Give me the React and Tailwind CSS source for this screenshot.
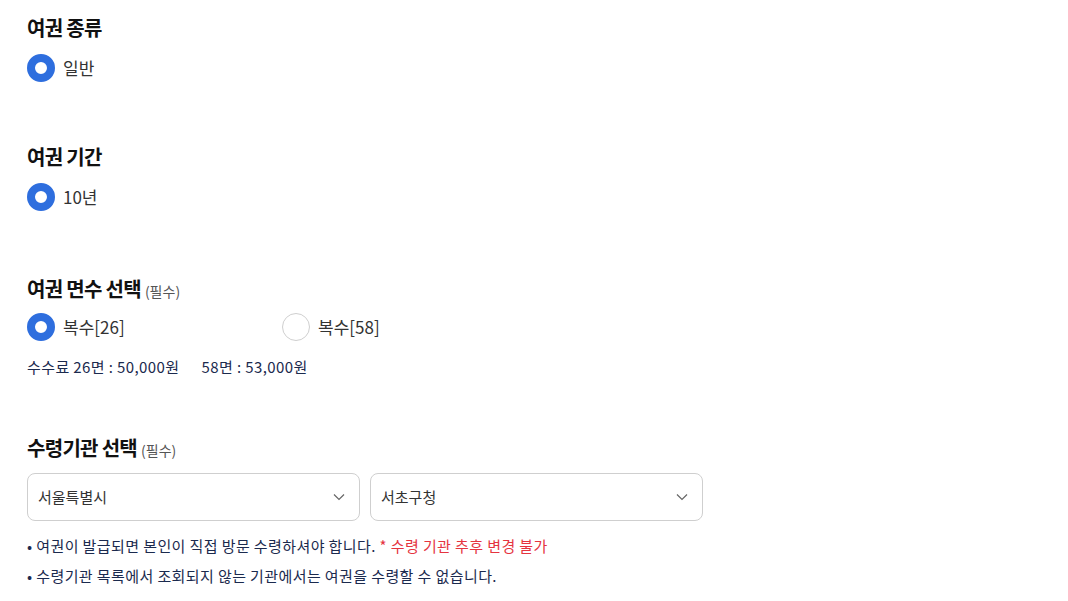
import React from "react";

const font = { fontFamily: '"Noto Sans CJK KR", "Noto Sans", sans-serif' };

function Radio({ checked, label }) {
  return (
    <div className="flex items-center">
      {checked ? (
        <span className="box-border block h-[28px] w-[28px] rounded-full border-[8px] border-[#2e6ede] bg-white" />
      ) : (
        <span className="box-border block h-[28px] w-[28px] rounded-full border border-[#cfcfcf] bg-white" />
      )}
      <span className="ml-[8px] text-[17px] leading-[24px] text-[#333]">{label}</span>
    </div>
  );
}

function Chevron() {
  return (
    <svg width="12" height="8" viewBox="0 0 12 8" fill="none">
      <path d="M1 1.5 L6 6.5 L11 1.5" stroke="#666" strokeWidth="1.2" />
    </svg>
  );
}

function Select({ value }) {
  return (
    <div className="flex h-[48px] w-[333px] items-center justify-between rounded-[8px] border border-[#cfcfcf] bg-white pl-[10px] pr-[14px]">
      <span className="text-[15px] text-[#333]">{value}</span>
      <Chevron />
    </div>
  );
}

export default function App() {
  return (
    <div style={font} className="min-h-[601px] w-[1068px] bg-white pl-[27px] pt-[14px]">
      <h2 className="h-[28px] text-[20px] font-bold leading-[28px] tracking-[-0.7px] text-[#111]">여권 종류</h2>
      <div className="mt-[12px]">
        <Radio checked label="일반" />
      </div>

      <h2 className="mt-[61px] h-[28px] text-[20px] font-bold leading-[28px] tracking-[-0.7px] text-[#111]">여권 기간</h2>
      <div className="mt-[12px]">
        <Radio checked label="10년" />
      </div>

      <h2 className="mt-[64px] flex h-[28px] items-baseline text-[20px] font-bold leading-[28px] tracking-[-0.7px] text-[#111]">
        여권 면수 선택
        <span className="ml-[4px] text-[14px] font-normal tracking-normal text-[#555]">(필수)</span>
      </h2>
      <div className="mt-[10px] flex">
        <div className="w-[255px]">
          <Radio checked label="복수[26]" />
        </div>
        <Radio label="복수[58]" />
      </div>
      <div className="mt-[15px] flex text-[15px] leading-[22px] tracking-[0.4px] text-[#1b2a4e]">
        <span>수수료 26면 : 50,000원</span>
        <span className="ml-[22px]">58면 : 53,000원</span>
      </div>

      <h2 className="mt-[56px] flex h-[28px] items-baseline text-[20px] font-bold leading-[28px] tracking-[-0.7px] text-[#111]">
        수령기관 선택
        <span className="ml-[4px] text-[14px] font-normal tracking-normal text-[#555]">(필수)</span>
      </h2>
      <div className="mt-[11px] flex gap-[10px]">
        <Select value="서울특별시" />
        <Select value="서초구청" />
      </div>
      <div className="mt-[14px] text-[15px] leading-[22px] tracking-[0.4px] text-[#1b2a4e]">
        <p>
          • 여권이 발급되면 본인이 직접 방문 수령하셔야 합니다.{" "}
          <span className="text-[#e5343f]">* 수령 기관 추후 변경 불가</span>
        </p>
        <p className="mt-[8px]">• 수령기관 목록에서 조회되지 않는 기관에서는 여권을 수령할 수 없습니다.</p>
      </div>
    </div>
  );
}
